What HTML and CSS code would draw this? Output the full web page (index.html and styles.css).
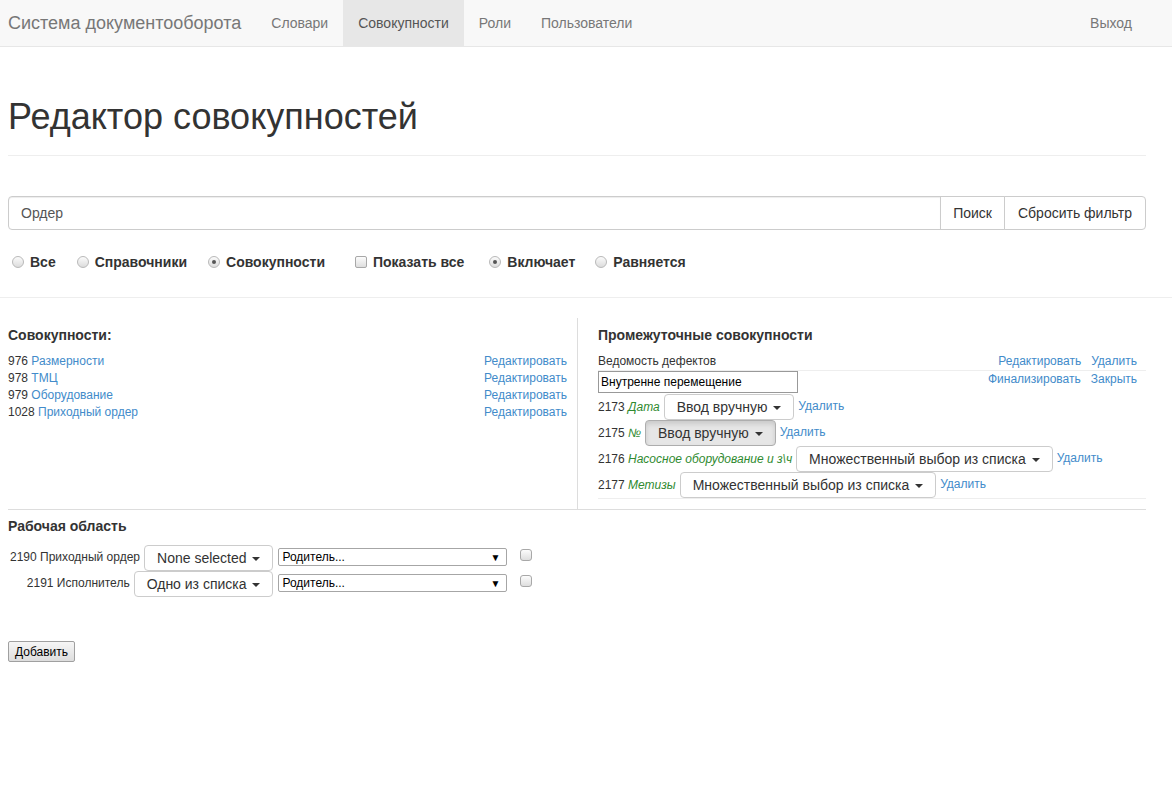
FILE: index.html
```html
<!DOCTYPE html>
<html lang="ru">
<head>
<meta charset="utf-8">
<title>Редактор совокупностей</title>
<link rel="stylesheet" href="styles.css">
</head>
<body>
<nav class="navbar">
  <span class="brand">Система документооборота</span>
  <ul class="nav">
    <li><a href="#">Словари</a></li>
    <li class="active"><a href="#">Совокупности</a></li>
    <li><a href="#">Роли</a></li>
    <li><a href="#">Пользователи</a></li>
  </ul>
  <ul class="nav nav-right">
    <li><a href="#">Выход</a></li>
  </ul>
</nav>

<div class="page">
  <header class="page-header"><h1>Редактор совокупностей</h1></header>

  <div class="search">
    <div class="search-input">Ордер</div>
    <button class="search-btn">Поиск</button>
    <button class="search-btn search-btn-last">Сбросить фильтр</button>
  </div>

  <div class="filters">
    <label class="opt"><span class="radio"></span>Все</label>
    <label class="opt"><span class="radio"></span>Справочники</label>
    <label class="opt"><span class="radio checked"></span>Совокупности</label>
    <label class="opt opt-wide"><span class="check"></span>Показать все</label>
    <label class="opt opt-mid"><span class="radio checked"></span>Включает</label>
    <label class="opt opt-narrow"><span class="radio"></span>Равняется</label>
  </div>
</div>

<hr class="rule">

<div class="page">
  <div class="columns">
    <section class="col-left">
      <h4 class="col-title">Совокупности:</h4>
      <div class="set-row"><span>976 <a href="#">Размерности</a></span><a href="#">Редактировать</a></div>
      <div class="set-row"><span>978 <a href="#">ТМЦ</a></span><a href="#">Редактировать</a></div>
      <div class="set-row"><span>979 <a href="#">Оборудование</a></span><a href="#">Редактировать</a></div>
      <div class="set-row"><span>1028 <a href="#">Приходный ордер</a></span><a href="#">Редактировать</a></div>
    </section>

    <section class="col-right">
      <h4 class="col-title">Промежуточные совокупности</h4>
      <div class="inter-head">
        <span>Ведомость дефектов</span>
        <span class="links"><a href="#">Редактировать</a><a href="#">Удалить</a></span>
      </div>
      <div class="inter-edit">
        <div class="text-box">Внутренне перемещение</div>
        <span class="links"><a href="#">Финализировать</a><a href="#">Закрыть</a></span>
      </div>
      <div class="params">
        <div class="param-row"><span class="param-label">2173 <em>Дата</em></span><button class="dd-btn">Ввод вручную <span class="caret"></span></button><a href="#" class="param-del">Удалить</a></div>
        <div class="param-row"><span class="param-label">2175 <em>№</em></span><button class="dd-btn active">Ввод вручную <span class="caret"></span></button><a href="#" class="param-del">Удалить</a></div>
        <div class="param-row"><span class="param-label">2176 <em>Насосное оборудование и з\ч</em></span><button class="dd-btn">Множественный выбор из списка <span class="caret"></span></button><a href="#" class="param-del">Удалить</a></div>
        <div class="param-row"><span class="param-label">2177 <em>Метизы</em></span><button class="dd-btn">Множественный выбор из списка <span class="caret"></span></button><a href="#" class="param-del">Удалить</a></div>
      </div>
    </section>
  </div>

  <section class="workspace">
    <h4 class="col-title ws-title">Рабочая область</h4>
    <div class="ws-grid">
      <div class="ws-cell"><span class="ws-label">2190 Приходный ордер</span><button class="dd-btn">None selected <span class="caret"></span></button></div>
      <div class="select"><span>Родитель...</span><span class="arrow">▼</span></div>
      <span class="ws-check"></span>

      <div class="ws-cell"><span class="ws-label">2191 Исполнитель</span><button class="dd-btn">Одно из списка <span class="caret"></span></button></div>
      <div class="select"><span>Родитель...</span><span class="arrow">▼</span></div>
      <span class="ws-check"></span>
    </div>
  </section>

  <button class="add-btn">Добавить</button>
</div>
</body>
</html>
```

FILE: styles.css
```css
* { box-sizing: border-box; }

body {
  margin: 0;
  font-family: "Liberation Sans", Arial, sans-serif;
  font-size: 14px;
  color: #333;
  background: #fff;
}

a { color: #428bca; text-decoration: none; }

/* navbar */
.navbar {
  display: flex;
  align-items: stretch;
  height: 47px;
  padding: 0 25px 0 8px;
  background: #f8f8f8;
  border-bottom: 1px solid #e7e7e7;
}
.brand {
  font-size: 18px;
  line-height: 46px;
  color: #777;
  padding-right: 15px;
}
.nav {
  display: flex;
  list-style: none;
  margin: 0;
  padding: 0;
}
.nav a {
  display: block;
  padding: 0 15px;
  line-height: 46px;
  color: #777;
}
.nav .active a { background: #e7e7e7; color: #555; }
.nav-right { margin-left: auto; }

/* page */
.page { margin: 0 26px 0 8px; }

.page-header {
  padding: 50px 0 18px;
  border-bottom: 1px solid #eee;
}
.page-header h1 {
  margin: 0;
  font-size: 36px;
  font-weight: normal;
  line-height: 40px;
  color: #333;
}

/* search */
.search {
  display: flex;
  height: 34px;
  margin-top: 40px;
}
.search-input {
  flex: 1;
  border: 1px solid #ccc;
  border-radius: 4px 0 0 4px;
  padding: 0 12px;
  line-height: 32px;
  color: #555;
  box-shadow: inset 0 1px 1px rgba(0,0,0,.075);
}
.search-btn {
  font-family: inherit;
  font-size: 14px;
  color: #333;
  background: #fff;
  border: 1px solid #ccc;
  margin-left: -1px;
  padding: 0 12px;
  height: 34px;
}
.search-btn-last { border-radius: 0 4px 4px 0; padding: 0 13px; }

/* filters */
.filters {
  display: flex;
  align-items: center;
  height: 20px;
  margin-top: 22px;
  font-weight: bold;
  font-size: 14px;
}
.opt {
  display: flex;
  align-items: center;
  gap: 6px;
  margin-left: 21px;
}
.opt:first-child { margin-left: 4px; }
.opt-wide { margin-left: 30px; }
.opt-mid { margin-left: 25px; }
.opt-narrow { margin-left: 20px; }

.radio {
  width: 12px;
  height: 12px;
  border-radius: 50%;
  border: 1px solid #b9b9b9;
  background: linear-gradient(#fbfbfb, #dcdcdc);
  position: relative;
}
.radio.checked::after {
  content: "";
  position: absolute;
  left: 3px;
  top: 3px;
  width: 4px;
  height: 4px;
  border-radius: 50%;
  background: #555;
}
.check {
  width: 12px;
  height: 12px;
  border-radius: 2px;
  border: 1px solid #a8a8a8;
  background: linear-gradient(#fcfcfc, #dedede);
}

.rule {
  margin: 25px 0 0;
  border: 0;
  border-top: 1px solid #eee;
}

/* columns */
.columns {
  display: grid;
  grid-template-columns: 570px 1fr;
  margin-top: 20px;
  border-bottom: 1px solid #ddd;
}
.col-left {
  padding-right: 10px;
  border-right: 1px solid #ddd;
  font-size: 12px;
}
.col-right {
  padding: 0 0 10px 20px;
  font-size: 12px;
}
.col-title {
  margin: 7px 0 8px;
  font-size: 14px;
  line-height: 20px;
  font-weight: bold;
  color: #333;
}
.set-row {
  display: flex;
  justify-content: space-between;
  line-height: 17px;
}

.links { display: flex; gap: 10px; padding-right: 9px; }

.inter-head {
  display: flex;
  justify-content: space-between;
  line-height: 17px;
  border-bottom: 1px solid #eee;
}
.inter-edit {
  display: flex;
  justify-content: space-between;
  align-items: flex-start;
  line-height: 17px;
  margin-bottom: 1px;
}
.text-box {
  width: 200px;
  height: 22px;
  border: 1px solid #999;
  padding: 0 2px;
  line-height: 20px;
  color: #000;
}

.params { border-bottom: 1px solid #eee; }
.param-row {
  display: flex;
  align-items: center;
  gap: 4px;
  height: 26px;
}
.param-label em { color: #2f8a2f; }
.param-del { margin-top: -3px; }

.dd-btn {
  font-family: inherit;
  font-size: 14px;
  color: #333;
  background: #fff;
  border: 1px solid #ccc;
  border-radius: 4px;
  height: 26px;
  padding: 0 12px;
  line-height: 24px;
  white-space: nowrap;
}
.dd-btn.active {
  background: #e6e6e6;
  border-color: #adadad;
  box-shadow: inset 0 3px 5px rgba(0,0,0,.125);
}
.caret {
  display: inline-block;
  width: 0;
  height: 0;
  margin-left: 2px;
  vertical-align: middle;
  border-top: 4px solid #333;
  border-left: 4px solid transparent;
  border-right: 4px solid transparent;
}

/* workspace */
.ws-title { margin: 6px 0 9px; }
.ws-grid {
  display: grid;
  grid-template-columns: auto 229px auto;
  grid-auto-rows: 26px;
  column-gap: 5px;
  justify-content: start;
  padding-left: 2px;
  font-size: 12px;
}
.ws-cell {
  display: flex;
  align-items: center;
  justify-content: flex-end;
  gap: 4px;
}
.ws-label { margin-top: -2px; }
.select {
  align-self: start;
  margin-top: 3px;
  height: 18px;
  display: flex;
  justify-content: space-between;
  align-items: center;
  border: 1px solid #a6a6a6;
  border-radius: 2px;
  padding: 0 6px 0 3px;
  color: #000;
  font-size: 12px;
}
.arrow { font-size: 10px; }
.ws-check {
  align-self: start;
  margin: 4px 0 0 8px;
  width: 12px;
  height: 12px;
  border: 1px solid #a8a8a8;
  border-radius: 3px;
  background: linear-gradient(#fcfcfc, #dedede);
}

.add-btn {
  margin-top: 44px;
  font-family: inherit;
  font-size: 12px;
  color: #000;
  height: 21px;
  padding: 0 6px;
  border: 1px solid #a0a0a0;
  border-radius: 2px;
  background: linear-gradient(#f6f6f6, #dddddd);
}
```
